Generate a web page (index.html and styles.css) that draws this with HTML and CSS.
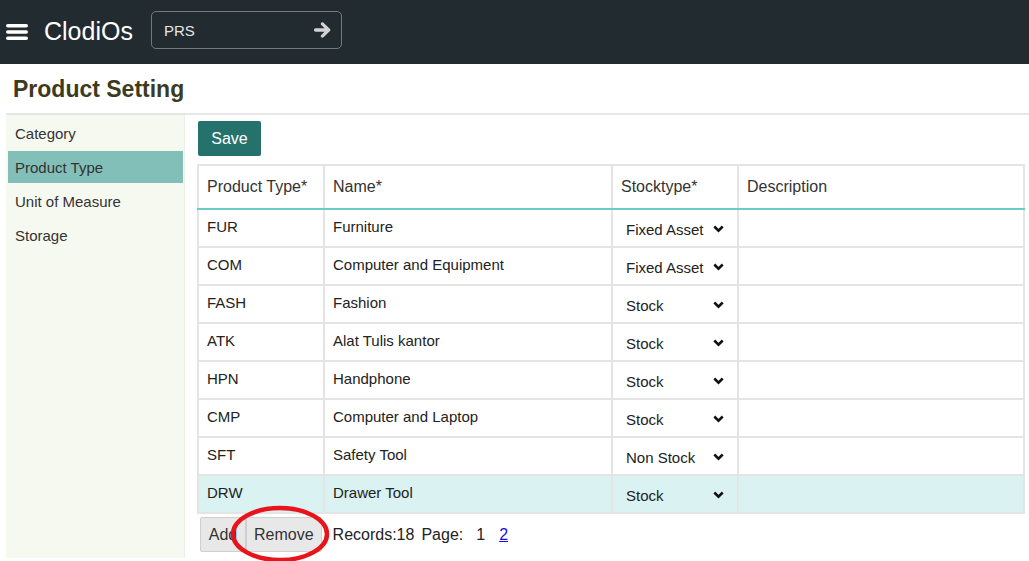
FILE: index.html
```html
<!DOCTYPE html>
<html lang="en">
<head>
<meta charset="utf-8">
<title>ClodiOs - Product Setting</title>
<link rel="stylesheet" href="styles.css">
</head>
<body>
<header class="topbar">
  <svg class="burger" width="22" height="16" viewBox="0 0 22 16" aria-hidden="true">
    <rect x="0" y="0" width="22" height="3.6" rx="1.8" fill="#fff"/>
    <rect x="0" y="6.2" width="22" height="3.6" rx="1.8" fill="#fff"/>
    <rect x="0" y="12.4" width="22" height="3.6" rx="1.8" fill="#fff"/>
  </svg>
  <span class="brand">ClodiOs</span>
  <div class="company">
    <span>PRS</span>
    <svg width="18" height="16" viewBox="0 0 18 16" aria-hidden="true">
      <path d="M1.5 6.3 H10.5 L7.3 3.1 C6.6 2.4 6.6 1.4 7.3 0.8 C8 0.2 8.9 0.2 9.5 0.8 L16 7 C16.6 7.6 16.6 8.4 16 9 L9.5 15.2 C8.9 15.8 8 15.8 7.3 15.2 C6.6 14.6 6.6 13.6 7.3 12.9 L10.5 9.7 H1.5 C0.6 9.7 0 9 0 8 C0 7 0.6 6.3 1.5 6.3 Z" fill="#d2d2d2"/>
    </svg>
  </div>
</header>

<div class="page">
  <h1 class="title">Product Setting</h1>
  <div class="body">
    <nav class="side">
      <div class="side-item">Category</div>
      <div class="side-item active">Product Type</div>
      <div class="side-item">Unit of Measure</div>
      <div class="side-item">Storage</div>
    </nav>
    <main class="main">
      <button class="save">Save</button>
      <table class="grid">
        <colgroup>
          <col class="c1"><col class="c2"><col class="c3"><col class="c4">
        </colgroup>
        <thead>
          <tr><th>Product Type*</th><th>Name*</th><th>Stocktype*</th><th>Description</th></tr>
        </thead>
        <tbody>
          <tr><td>FUR</td><td>Furniture</td><td><div class="sel"><span>Fixed Asset</span><svg class="chev" width="11" height="8" viewBox="0 0 11 8"><path d="M1.3 1.5 L5.5 5.7 L9.7 1.5" fill="none" stroke="#111" stroke-width="2.5"/></svg></div></td><td></td></tr>
          <tr><td>COM</td><td>Computer and Equipment</td><td><div class="sel"><span>Fixed Asset</span><svg class="chev" width="11" height="8" viewBox="0 0 11 8"><path d="M1.3 1.5 L5.5 5.7 L9.7 1.5" fill="none" stroke="#111" stroke-width="2.5"/></svg></div></td><td></td></tr>
          <tr><td>FASH</td><td>Fashion</td><td><div class="sel"><span>Stock</span><svg class="chev" width="11" height="8" viewBox="0 0 11 8"><path d="M1.3 1.5 L5.5 5.7 L9.7 1.5" fill="none" stroke="#111" stroke-width="2.5"/></svg></div></td><td></td></tr>
          <tr><td>ATK</td><td>Alat Tulis kantor</td><td><div class="sel"><span>Stock</span><svg class="chev" width="11" height="8" viewBox="0 0 11 8"><path d="M1.3 1.5 L5.5 5.7 L9.7 1.5" fill="none" stroke="#111" stroke-width="2.5"/></svg></div></td><td></td></tr>
          <tr><td>HPN</td><td>Handphone</td><td><div class="sel"><span>Stock</span><svg class="chev" width="11" height="8" viewBox="0 0 11 8"><path d="M1.3 1.5 L5.5 5.7 L9.7 1.5" fill="none" stroke="#111" stroke-width="2.5"/></svg></div></td><td></td></tr>
          <tr><td>CMP</td><td>Computer and Laptop</td><td><div class="sel"><span>Stock</span><svg class="chev" width="11" height="8" viewBox="0 0 11 8"><path d="M1.3 1.5 L5.5 5.7 L9.7 1.5" fill="none" stroke="#111" stroke-width="2.5"/></svg></div></td><td></td></tr>
          <tr><td>SFT</td><td>Safety Tool</td><td><div class="sel"><span>Non Stock</span><svg class="chev" width="11" height="8" viewBox="0 0 11 8"><path d="M1.3 1.5 L5.5 5.7 L9.7 1.5" fill="none" stroke="#111" stroke-width="2.5"/></svg></div></td><td></td></tr>
          <tr class="selected"><td>DRW</td><td>Drawer Tool</td><td><div class="sel"><span>Stock</span><svg class="chev" width="11" height="8" viewBox="0 0 11 8"><path d="M1.3 1.5 L5.5 5.7 L9.7 1.5" fill="none" stroke="#111" stroke-width="2.5"/></svg></div></td><td></td></tr>
        </tbody>
      </table>
      <div class="footer">
        <button class="btn add">Add</button>
        <button class="btn">Remove</button>
        <span class="records">Records:18</span>
        <span class="pagelbl">Page:</span>
        <span class="pg">1</span>
        <a class="pg link" href="#">2</a>
        <svg class="mark" width="104" height="60" viewBox="0 0 104 60" aria-hidden="true">
          <ellipse cx="50" cy="29" rx="47" ry="26" fill="none" stroke="#e8141c" stroke-width="4.5"/>
        </svg>
      </div>
    </main>
  </div>
</div>
</body>
</html>
```

FILE: styles.css
```css
* { box-sizing: border-box; }
html, body { margin: 0; padding: 0; background: #fff; }
body {
  font-family: "Liberation Sans", Arial, sans-serif;
  color: #222;
  width: 1029px;
  height: 561px;
  overflow: hidden;
}

.topbar {
  height: 64px;
  background: #222b30;
  display: flex;
  align-items: center;
  padding-left: 6px;
}
.brand {
  color: #fff;
  font-size: 25px;
  margin-left: 16px;
  margin-top: -1px;
}
.company {
  margin-left: 18px;
  width: 191px;
  height: 38px;
  border: 1.5px solid #74797c;
  border-radius: 5px;
  display: flex;
  align-items: center;
  justify-content: space-between;
  padding: 0 9px 0 12px;
  color: #e6e6e6;
  font-size: 15px;
  margin-top: -4px;
}

.page { padding-left: 6px; }
.title {
  margin: 0;
  height: 51px;
  padding: 12px 0 0 7px;
  font-size: 23px;
  font-weight: bold;
  color: #3d3b1d;
  border-bottom: 2px solid #e6e6e6;
}
.body { display: flex; }
.side {
  flex: none;
  width: 179px;
  height: 443px;
  background: #f6f9f0;
  border-right: 1px solid #eceee8;
}
.side-item {
  height: 32px;
  margin: 2px 1px 0 2px;
  padding-left: 7px;
  display: flex;
  align-items: center;
  font-size: 15px;
  color: #333;
}
.side-item.active { background: #82bfb8; }

.main {
  flex: 1;
  min-width: 0;
  padding: 6px 4px 0 12px;
  position: relative;
}
.save {
  display: block;
  margin-left: 1px;
  width: 63px;
  height: 35px;
  background: #25716c;
  color: #fff;
  border: none;
  border-radius: 2px;
  font-family: inherit;
  font-size: 16px;
  padding: 0;
}
.grid {
  margin-top: 8px;
  width: 826px;
  border-collapse: collapse;
  table-layout: fixed;
  font-size: 15px;
}
.c1 { width: 126px; }
.c2 { width: 288px; }
.c3 { width: 126px; }
.c4 { width: 286px; }
.grid th, .grid td {
  border: 2px solid #e4e4e4;
  text-align: left;
  padding: 0 8px;
}
.grid th {
  height: 44px;
  font-weight: normal;
  font-size: 16px;
  color: #333;
  border-bottom: 2px solid #6ccbc6;
}
.grid td {
  height: 38px;
  padding-bottom: 3px;
  color: #222;
}
.grid tr.selected td { background: #daf2f2; }
.sel {
  display: flex;
  align-items: center;
  justify-content: space-between;
  width: 98px;
  margin-left: 5px;
  padding-top: 5px;
}
.chev { flex: none; }

.footer {
  display: flex;
  align-items: center;
  margin-top: 3px;
  margin-left: 3px;
  font-size: 16px;
  color: #222;
  position: relative;
}
.btn {
  height: 35px;
  background: #e8e8e8;
  border: 1px solid #cfcfcf;
  border-radius: 2px;
  font-family: inherit;
  font-size: 16px;
  color: #333;
  padding: 0 7px;
}
.add { width: 46px; }
.records { margin-left: 11px; }
.pagelbl { margin-left: 7px; }
.pg { margin-left: 13px; }
.link { margin-left: 14px; color: #1a0dde; text-decoration: underline; }
.mark {
  position: absolute;
  left: 30px;
  top: -12px;
}
```
